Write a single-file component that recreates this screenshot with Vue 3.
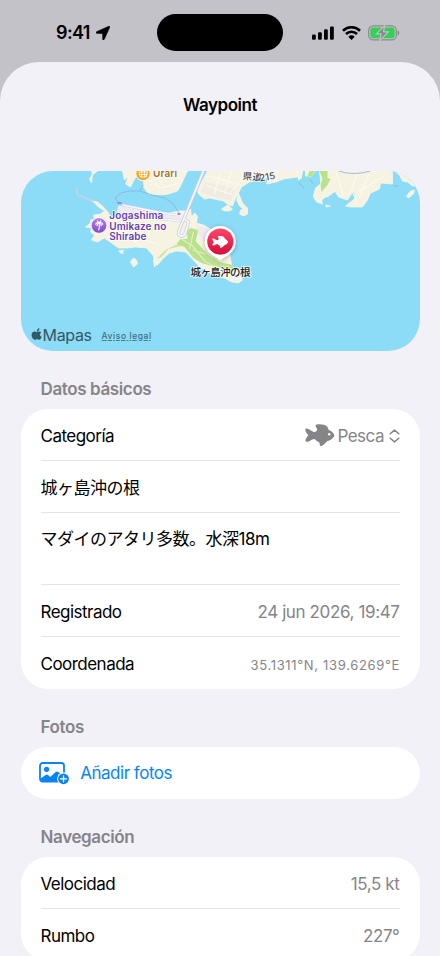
<script setup>
const navigation = [
  { label: 'Velocidad', value: '15,5 kt' },
  { label: 'Rumbo', value: '227°' },
]
const fishPath = 'M9.6 8.2c1.2-.6 2.1-1.3 2.5-2.2.2-1.3-1-2.8-1.5-4.1-.2-.9.2-1.4 1.2-1.5 4-.6 8.4.2 10.3 2.2 1.1 1.1 1 2.6 1.7 3.3 2.2.9 4.3 2.6 5.2 4.4.4.8.4 1.7-.1 2.4-1.6 2.1-3.8 3.6-6.3 4.4-1.6.7-2.9 3.8-6.1 4.8-.9.3-1.6 0-1.7-.9l-.4-2.5c-1.9-.6-3.5-1.9-4.8-3.4-2 .1-3.5 1.3-5.4 2.1-2 .9-3.9.8-3.7-.9.3-1.9 1.4-3.5 2.8-5.1C2 9.4.5 7.7.3 5.9c-.1-1.3.8-1.5 2.3-1.1 2.5.7 4.3 2.7 7 3.4z'
</script>

<template>
  <div class="screen">
    <header class="status">
      <div class="clock">
        <span>9:41</span>
        <svg width="14" height="14" viewBox="0 0 14 14"><path d="M12.8.2.8 5.6C-.3 6.1-.1 7.4 1 7.4h5.2c.3 0 .4.1.4.4V13c0 1.1 1.3 1.3 1.8.2L13.8 1.2c.3-.7-.3-1.3-1-1z" stroke="#000" stroke-width=".5" /></svg>
      </div>
      <div class="island"></div>
      <div class="indicators">
        <svg width="22" height="14" viewBox="0 0 22 14">
          <rect x="0" y="8.6" width="3.8" height="5.2" rx="1.2" />
          <rect x="6" y="6.2" width="3.8" height="7.6" rx="1.2" />
          <rect x="12" y="3.3" width="3.8" height="10.5" rx="1.2" />
          <rect x="18" y=".4" width="3.8" height="13.4" rx="1.2" />
        </svg>
        <svg class="wifi" width="19" height="14" viewBox="0 0 19 14">
          <g fill="none" stroke="#000" stroke-width="2.6">
            <path d="M1 4.7a12.3 12.3 0 0 1 17 0" />
            <path d="M4 8a8 8 0 0 1 11 0" />
          </g>
          <path d="M6.3 10.7a4.8 4.8 0 0 1 6.4 0L9.5 13.9z" />
        </svg>
        <svg class="battery" width="32" height="16" viewBox="0 0 32 16">
          <rect x=".7" y=".9" width="27.6" height="14" rx="4.6" fill="none" stroke="#8a8a8d" stroke-width="1.2" />
          <rect x="2.4" y="2.6" width="24.2" height="10.6" rx="3" fill="#32d158" />
          <path d="M29.6 5.4c2.2.5 2.2 4.5 0 5z" fill="#8a8a8d" />
          <path d="M16.8.4 8.5 8.9h4.6l-1.4 6.7 8.5-8.8h-4.8z" fill="#858588" stroke="#c3c2c8" stroke-width="1.2" />
        </svg>
      </div>
    </header>

    <main class="sheet">
      <h1>Waypoint</h1>

      <div class="map">
        <svg width="399" height="180" viewBox="20.5 171 399 180">
          <defs>
            <linearGradient id="pin" x1="0" y1="0" x2="0" y2="1"><stop offset="0" stop-color="#ff4668" /><stop offset="1" stop-color="#d60d3c" /></linearGradient>
            <linearGradient id="park" x1="0" y1="0" x2="0" y2="1"><stop offset="0" stop-color="#b580ee" /><stop offset="1" stop-color="#8347cb" /></linearGradient>
            <filter id="shade" x="-40%" y="-40%" width="180%" height="180%"><feDropShadow dx="0" dy="1" stdDeviation="2" flood-opacity=".3" /></filter>
          </defs>
          <rect x="20" y="171" width="400" height="180" fill="#8cdcf7" />
          <g fill="#f7f3e2" stroke="#fbf8ea" stroke-width=".7">
            <path d="M92 201L97 202 103 207 108 213 110 217 116 215 118 206 130 207 145 209 165 214 178 211 184 211 190 209 191 217 194 213 197 216 196 223 203 225 211 230 222 238 229 252 231 265 237 271 242 280 238 283 231 282 224 278 213 275 200 268 192 259 185 252 176 251 169 253 162 259 157 265 154 264 153 256 146 248 135 247 127 248 118 248 111 243 104 238 97 242 91 240 94 235 90 232 91 228 85 227 90 223 90 220 94 219 93 215 100 214 104 211 98 207z" />
            <path d="M91 171l1 3-3 5 2 4 1-8 5-4zM122 171h17l-6 10-3 6-5-3 3-8-4 4zM143 178l4-7h40l-7 15-3 5-9 3-8 1-12-1-5-7z" />
            <path d="M207 171h71l-9 6-11 3-9 2-8 5-3 6-3 5-3 8-4-1-5-4-14-3-5 1-6-5-1-4z" />
            <path d="M271 171h30l-4 6-14 2-7 3-10 2z" />
            <path d="M319 171H392V184L380 183 379 189 370 193 367 200 362 207 350 207 345 206 355 198 353 191 347 200 338 197 333 189 328 195 321 200 322 204 316 202 313 195 321 189 320 181z" />
            <path d="M320 184L315 188 313 196 314 199 321 202 322 195 327 197 335 191 330 184z" />
            <path d="M394 171h13l6 7 3 8-4 0-5-4-5-1-3-6zM297 171h5l-1 7-3 2zM305 171h10l-5 6-5-1z" />
            <path d="M238 193l4 10 5 5 0 6-4 2-4-2 1-4 3-1-4-3-3-6zM221 209l6-4 5 4-3 2-5 0zM410 191l4-1-1 4-5 4-2-2zM130 262l3-4 3 2 1 4-4 3zM153 260l3-2 1 5-3 4zM118 251l5-1-1 4zM325 205l5 1-4 1z" />
          </g>
          <g fill="#b9e28d">
            <path d="M309 171h6l-4 5-5 2zM319 171h8v7l3 1-3 6-6 7-1-7 2-6z" />
            <path d="M186 231l4-3 8 2-3 11 13 14 11 7 13 3 2 7-16-4-17-5-8-5-9-11-8-3 4-5 7 0z" />
            <path d="M303 183l3-1 0 2zM156 259l9-9 10-5 7-1-1 2-13 3-7 8z" opacity=".75" />
          </g>
          <g fill="#eeeaf0"><path d="M118 206l30 5 29 3 4 5-32-1-33-5zM196 225l11 3 5 7-9 5-5-5z" /><path fill="#f0ece2" d="M204 182l31 7-4 12-31-8z" /></g>
          <g fill="none" stroke="#fefcf5" stroke-width=".9">
            <path d="M148 180l13 8 17-5M153 172l12 16M163 171l18 8M205 185l27 10M209 176l30 9M219 174l-5 19M231 171l-7 23M245 174l-16 20M98 222l12 12 19 4 13 9M125 222l12 15 22 8M154 221l-7 16-14 5M335 171l8 25M357 173l-6 17 5 12M368 174l-9 24M385 175l-27 17" />
            <path d="M181 239l11 7 13 16 15 7M193 232l-4 17M192 250l13 4" stroke="#e5ebc5" stroke-width="1.2" />
          </g>
          <g fill="none" stroke="#c9cfe4">
            <path d="M76 187l1 8 15 6" stroke-width="1.6" />
            <path d="M118 204l-3-6 5-5 9-2h10l13 4 12 3 9 6 6 10M139 191l4-6M338 171q15 5 32 0M298 182l6 7M309 179l4 5M393 186h5" stroke="#88afe2" stroke-width=".8" />
            <path d="M122 205l30 6 23 4M115 214l65 7" stroke-width="2.4" />
            <path d="M122 205l30 6 23 4M115 214l65 7" stroke="#faf8fa" stroke-width="1.3" />
            <path d="M203 171l-21 51-4 10q0 5 4 4 3-1 4-7l2-7-5-4" stroke-width="3.4" stroke-linejoin="round" />
            <path d="M203 171l-21 51-4 10q0 5 4 4 3-1 4-7l2-7-5-4" stroke="#f7f6fa" stroke-width="1.8" />
            <path d="M117 203h4M177 214h3" stroke="#9d8bd8" stroke-width="2" />
          </g>
          <circle cx="142.5" cy="173.5" r="7.2" fill="#f3a51d" stroke="#fff" stroke-width="1" />
          <path d="M138.5 172h8.5l-1.2 5h-6.2zM139 174.5h7.5M141.3 171v6M144.2 171v6" stroke="#fff" fill="none" stroke-width=".9" />
          <circle cx="98.5" cy="225.5" r="7.8" fill="url(#park)" stroke="#fff" stroke-width=".8" />
          <path d="M98.2 230q1.1-3 .5-6M95.2 224.3q1-2.5 3.4-1.2 2.8-1.3 3.6 1.2M98.6 223q-2 .7-2.1 2.6M98.6 223q2.3.5 2.1 2.7M98.5 223l-1.6-2.1M98.6 223l1.7-2.1" fill="none" stroke="#fff" stroke-width="1.15" stroke-linecap="round" />
          <g class="poi">
            <text x="152.6" y="177.2" fill="#9d742f" textLength="24">Urari</text>
            <g fill="#6540b0">
              <text x="108.8" y="218.9" textLength="54">Jogashima</text>
              <text x="108.8" y="229.5" textLength="57">Umikaze no</text>
              <text x="108.8" y="240.3" textLength="37">Shirabe</text>
            </g>
          </g>
          <text class="road" x="242" y="179" transform="rotate(6 242 179)">県道</text>
          <text class="road" x="259.5" y="181.5" transform="rotate(-10 259.5 181.5)">215</text>
          <g filter="url(#shade)">
            <path d="M219.8 226a15.6 15.6 0 0 1 7.2 29.4c-3.4 1.7-4.6 2.6-5.8 4.2q-1.4 1.3-2.8 0c-1.2-1.6-2.4-2.5-5.8-4.2A15.6 15.6 0 0 1 219.8 226z" fill="#fff" />
            <circle cx="219.8" cy="241.6" r="13.1" fill="url(#pin)" />
          </g>
          <svg x="211.6" y="235.8" width="16.4" height="12.2" viewBox="0 0 30 22.3"><path :d="fishPath" fill="#fff" /></svg>
          <text class="place" x="190" y="276.3" textLength="60">城ヶ島沖の根</text>
          <path transform="translate(30.8 328) scale(.96)" d="M8.3 1.2C8.2 2.5 7.1 3.6 5.7 3.5 5.7 2 6.8.6 8.3.1zM5.6 4.3c.7 0 1.5-.8 2.6-.7.9 0 1.7.4 2.2 1.1-2 1.2-1.7 3.8.4 4.7-.5 1.3-1.4 2.8-2.5 2.9-.8 0-1.2-.5-2.2-.5-1.1 0-1.4.5-2.2.5C2.1 12.4.3 9.5.3 7.3c0-2.1 1.4-3.6 3-3.6 1 0 1.7.6 2.3.6z" fill="#345864" />
          <text class="brand" x="42" y="340.5" textLength="49">Mapas</text>
          <text class="legal" x="101.1" y="339" textLength="49">Aviso legal</text>
        </svg>
      </div>

      <h2>Datos básicos</h2>
      <section class="card">
        <div class="row">
          <span>Categoría</span>
          <span class="picker">
            <svg class="fish" width="30" height="22.3" viewBox="0 0 30 22.3"><path :d="fishPath" /><circle cx="24.2" cy="10.2" r="1.2" fill="#fff" /></svg>
            <span class="choice">Pesca</span>
            <svg class="chevrons" width="11" height="14" viewBox="0 0 11 14"><path d="M1.2 4.8 5.5 1.1l4.3 3.7M1.2 9.2l4.3 3.7 4.3-3.7" /></svg>
          </span>
        </div>
        <div class="row"><span class="cjk">城ヶ島沖の根</span></div>
        <div class="row note"><span class="cjk">マダイのアタリ多数。水深18m</span></div>
        <div class="row"><span>Registrado</span><span class="value">24 jun 2026, 19:47</span></div>
        <div class="row"><span>Coordenada</span><span class="value coords">35.1311°N, 139.6269°E</span></div>
      </section>

      <h2>Fotos</h2>
      <section class="card">
        <div class="row add">
          <svg width="31" height="23" viewBox="0 0 31 23">
            <rect x="1" y="1" width="24" height="18.6" rx="2.6" fill="none" stroke="#0a84f5" stroke-width="1.8" />
            <circle cx="7.6" cy="7.3" r="2.6" />
            <path d="M1.5 16.5 7 12.8q1-.6 2 .2l2.2 1.9 5.5-5q1.2-1 2.5 0l5.8 4.8v5H3z" />
            <circle cx="24.5" cy="16.8" r="6.4" fill="#fff" />
            <circle cx="24.5" cy="16.8" r="5.4" />
            <path d="M24.5 13.8v6M21.5 16.8h6" stroke="#fff" stroke-width="1.3" stroke-linecap="round" />
          </svg>
          <span>Añadir fotos</span>
        </div>
      </section>

      <h2>Navegación</h2>
      <section class="card">
        <div v-for="item in navigation" :key="item.label" class="row nav">
          <span>{{ item.label }}</span><span class="value">{{ item.value }}</span>
        </div>
      </section>
    </main>
  </div>
</template>

<style>
body { margin: 0; overflow: hidden; }
</style>

<style scoped>
.screen {
  width: 440px;
  height: 956px;
  overflow: hidden;
  background: #c3c2c8;
  color: #000;
  font: 400 17px/22px Inter, "Noto Sans CJK JP", sans-serif;
  letter-spacing: -0.52px;
}
svg { display: block; flex: none; }
.status {
  height: 62px;
  display: grid;
  grid-template-columns: 157px 126px 157px;
}
.clock {
  display: flex;
  align-items: center;
  gap: 6px;
  height: 22px;
  padding: 22px 0 0 56px;
  font-size: 18px;
  font-weight: 600;
  letter-spacing: -0.6px;
}
.island { height: 37px; margin-top: 14px; border-radius: 19px; background: #000; }
.indicators { display: flex; align-items: center; height: 16px; padding: 24.5px 0 0 29px; }
.wifi { margin-left: 8px; }
.battery { margin-left: 7px; }
.sheet {
  height: 894px;
  overflow: hidden;
  box-sizing: border-box;
  padding: 32px 20.5px 0;
  border-radius: 39px 39px 0 0;
  background: #f2f1f7;
}
h1 { margin: 0; text-align: center; font-size: 17px; line-height: 22px; font-weight: 600; letter-spacing: -0.45px; }
.map { height: 180px; margin-top: 55px; border-radius: 32px; overflow: hidden; }
.poi { font: 600 10px Inter, sans-serif; letter-spacing: 0; paint-order: stroke; stroke: #fffc; stroke-width: 1.5px; }
.road { font: 500 9.5px Inter, "Noto Sans CJK JP", sans-serif; fill: #4b4b4b; letter-spacing: 0; paint-order: stroke; stroke: #fffc; stroke-width: 1.5px; }
.place { font: 500 10.5px "Noto Sans CJK JP", sans-serif; letter-spacing: 0; fill: #222; paint-order: stroke; stroke: #fffa; stroke-width: 2px; }
.brand { font: 400 16px Inter, sans-serif; fill: #345864; }
.legal { font: 500 8.5px Inter, sans-serif; fill: #3f6d7c; text-decoration: underline; }
h2 {
  margin: 27px 20px 9px;
  font-size: 17px;
  line-height: 22px;
  font-weight: 600;
  letter-spacing: -0.38px;
  color: #858589;
}
.card { padding: 0 20px; border-radius: 27px; background: #fff; }
.row {
  box-sizing: border-box;
  height: 52px;
  display: flex;
  align-items: center;
  justify-content: space-between;
  padding-top: 3px;
  border-bottom: 1px solid #e5e5e7;
}
.row:last-child { border-bottom-color: transparent; }
.note { height: 72px; align-items: flex-start; padding-top: 15px; }
.cjk { letter-spacing: -0.5px; }
.value, .picker { color: #858589; }
.value { letter-spacing: -0.38px; }
.picker { display: flex; align-items: center; }
.fish, .chevrons { fill: #858589; }
.fish { margin-bottom: 1px; }
.choice { margin: 0 4.5px 0 2px; letter-spacing: -0.5px; }
.chevrons { fill: none; stroke: #858589; stroke-width: 1.5; stroke-linecap: round; stroke-linejoin: round; }
.coords { padding-top: 2px; font-size: 13px; letter-spacing: 0.67px; margin-right: -0.6px; }
.add { justify-content: flex-start; gap: 10px; padding-top: 1px; margin-left: -1.3px; letter-spacing: -0.48px; color: #0a84f5; }
.add svg { fill: #0a84f5; }
.nav { padding-top: 2px; }
</style>
